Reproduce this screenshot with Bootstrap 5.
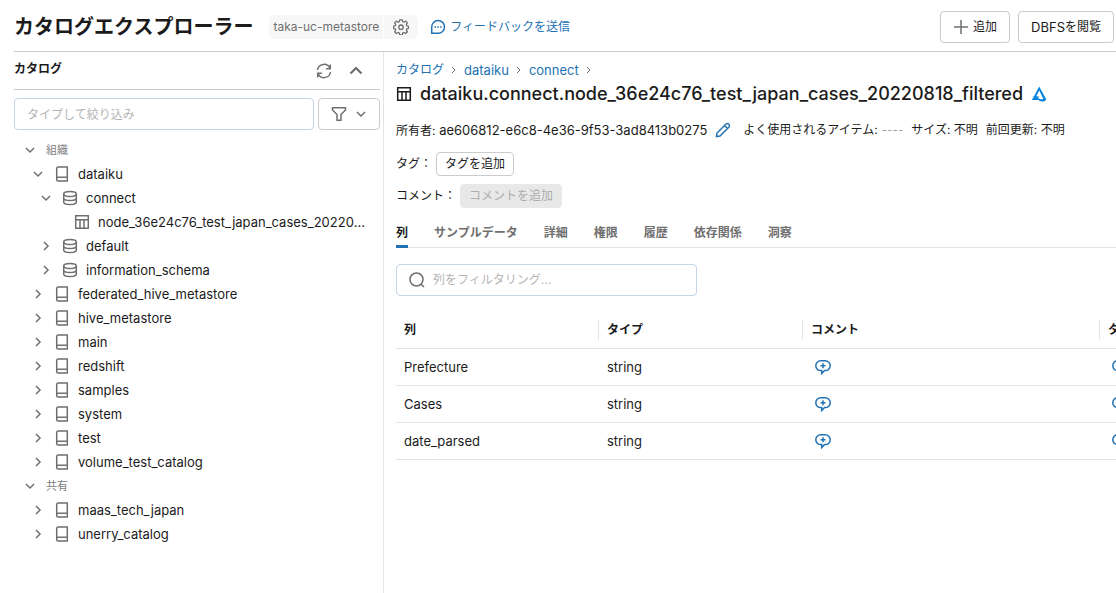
<!DOCTYPE html>
<html lang="ja">
<head>
<meta charset="utf-8">
<meta name="viewport" content="width=device-width, initial-scale=1">
<title>カタログエクスプローラー</title>
<link href="https://cdn.jsdelivr.net/npm/bootstrap@5.3.0/dist/css/bootstrap.min.css" rel="stylesheet">
<style>
  :root { --ink: #1b1b1b; --muted: #6f6f6f; --line: #cbcbcb; --soft: #e4e4e4; --blue: #2272b4; }
  body { font-family: Inter, "Noto Sans CJK JP", sans-serif; font-size: 13px; line-height: 20px; color: var(--ink); background: #fff; }
  a { color: var(--blue); text-decoration: none; }
  svg { fill: none; stroke: currentColor; stroke-width: 1.5; flex: none; display: block; }
  .ja { font-size: 12px; }
  .ic { width: 16px; height: 16px; }
  .ic-sm { width: 12px; height: 12px; }
  .muted { color: var(--muted); }
  .page-head { margin-left: 14px; height: 52px; padding: 2px 2px 0 0; border-bottom: 1px solid var(--line); }
  .page-title { font-size: 20px; line-height: 28px; font-weight: 700; }
  .chip { background: #f7f7f7; color: var(--muted); font-size: 12px; height: 24px; padding: 2px 4px; margin-right: 1px; }
  .chip-icon { background: #f7f7f7; color: var(--muted); border: 0; height: 24px; padding: 4px 9px; }
  .tool { --bs-btn-font-size: 12px; --bs-btn-line-height: 20px; --bs-btn-padding-x: 12px; --bs-btn-padding-y: 5px; --bs-btn-color: var(--ink); --bs-btn-border-color: var(--line); --bs-btn-border-radius: 4px; display: flex; align-items: center; white-space: nowrap; }
  .tool-sm { --bs-btn-padding-x: 8px; --bs-btn-padding-y: 1px; }
  .tool-off:disabled { background: #e8e8e8; border-color: #e8e8e8; color: #adadad; opacity: 1; }
  .latin { font-size: 13px; }
  .side { width: 384px; padding: 0 3px 0 14px; border-right: 1px solid var(--soft); }
  .side-head { height: 38px; border-bottom: 1px solid var(--line); }
  .bare { border: 0; background: none; padding: 0; color: var(--muted); }
  .edit { color: var(--blue); }
  .field { border: 1px solid #c3d5e6; border-radius: 4px; height: 32px; padding: 0 12px; font-size: 12px; color: var(--ink); }
  .field::placeholder, .field input::placeholder { color: #b5b5b5; opacity: 1; }
  .field input { border: 0; outline: 0; padding: 0; }
  .tree { padding-top: 8px; }
  .tree li { display: flex; align-items: center; height: 24px; color: var(--muted); }
  .tree a { color: var(--ink); margin-left: 8px; }
  .tree .ic { margin-left: 10px; }
  .lv0 { padding-left: 10px; }
  .lv0 span { margin-left: 10px; font-size: 11px; color: #808080; }
  .lv1 { padding-left: 18px; }
  .lv2 { padding-left: 26px; }
  .lv3 { padding-left: 50px; padding-right: 8px; }
  .detail { min-width: 0; padding-left: 12px; overflow: hidden; }
  .crumbs { padding-top: 8px; gap: 7px; }
  .crumbs svg { color: var(--muted); stroke-width: 1; }
  .obj-title { font-size: 18px; line-height: 24px; font-weight: 500; margin: 2px 0 0; }
  .meta { margin-top: 14px; height: 20px; }
  .tabs { margin-top: 8px; gap: 26px; border-bottom: 1px solid var(--soft); height: 32px; --bs-nav-link-padding-x: 0; --bs-nav-link-padding-y: 7px; }
  .tabs .nav-link { font-size: 12px; font-weight: 700; color: var(--muted); height: 32px; line-height: 20px; }
  .tabs .nav-link.active { color: var(--ink); border-bottom: 3px solid var(--blue); }
  .filter { width: 301px; margin-top: 16px; }
  .grid { table-layout: fixed; width: 904px; margin-top: 16px; --bs-table-border-color: #e4e4e4; --bs-table-color: #1b1b1b; }
  .grid > :not(caption) > * > * { padding: 8px; }
  .grid th { font-size: 12px; font-weight: 700; }
  .grid th > div { margin-right: -8px; border-right: 1px solid var(--soft); }
  .say { color: var(--blue); padding: 2px 4px; display: block; }
</style>
</head>
<body class="min-vh-100 d-flex flex-column overflow-x-hidden">
<svg width="0" height="0" class="position-absolute" aria-hidden="true">
  <symbol id="down" viewBox="0 0 12 12"><path d="M2 4l4 4 4-4"/></symbol>
  <symbol id="right" viewBox="0 0 12 12"><path d="M4 2l4 4-4 4"/></symbol>
  <symbol id="book" viewBox="0 0 16 16"><path d="M13.3 11.2V1H4.2Q2.700 1 2.700 2.500v11Q2.700 15 4.200 15h9.100v-3.800H4.400q-1.700 0-1.700 2"/></symbol>
  <symbol id="db" viewBox="0 0 16 16"><ellipse cx="8" cy="4" rx="6.300" ry="2.500"/><path d="M1.700 4v8c0 1.400 2.800 2.500 6.300 2.500s6.300-1.100 6.300-2.500V4M1.700 8c0 1.400 2.800 2.500 6.300 2.500s6.300-1.100 6.300-2.500"/></symbol>
  <symbol id="tbl" viewBox="0 0 16 16"><path d="M1.700 1.700h12.600v12.600H1.700zM1.700 5.700h12.600M6 5.700v8.600M10 5.700v8.600"/></symbol>
  <symbol id="say" viewBox="0 0 16 16"><path d="M5.700 1.800h4.600a4.900 4.900 0 0 1 0 9.800H9.600L6.700 14.600v-3h-1a4.900 4.900 0 0 1 0-9.800zM8 4.200v5M5.500 6.700h5"/></symbol>
</svg>

<header class="page-head d-flex align-items-center">
  <h1 class="page-title m-0 text-nowrap">カタログエクスプローラー</h1>
  <div class="d-flex ms-3">
    <span class="chip rounded-start text-nowrap">taka-uc-metastore</span>
    <button type="button" class="chip-icon rounded-end" aria-label="設定"><svg class="ic" viewBox="0 0 16 16"><path stroke-width="1.300" stroke-linejoin="round" d="M6.700.8h2.600l.4 1.900 1.200.5 1.700-1.100 1.800 1.800-1.100 1.700.5 1.200 1.800.4v2.200l-1.800.5-.5 1.200 1.100 1.600-1.800 1.800-1.700-1-1.200.4-.4 1.900H6.700l-.4-1.900-1.200-.4-1.700 1-1.800-1.800 1.100-1.600-.5-1.200L.4 9.400V7.200l1.800-.4.5-1.200L1.600 3.900l1.800-1.800 1.700 1.100 1.200-.5z"/><circle cx="8" cy="8.200" r="2.200" stroke-width="1.300"/></svg></button>
  </div>
  <a href="#" class="d-flex align-items-center gap-1 ja ms-2 ps-1 text-nowrap"><svg class="ic" viewBox="0 0 16 16"><path d="M1.700 14.300V8A6.400 6.400 0 1 1 8 14.300z"/><path d="M4.500 8H6M7.250 8h1.500M10 8h1.500"/></svg>フィードバックを送信</a>
  <div class="d-flex gap-2 ms-auto">
    <button type="button" class="btn tool gap-1"><svg class="ic muted" viewBox="0 0 16 16"><path d="M8 1v14M1 8h14"/></svg>追加</button>
    <button type="button" class="btn tool"><span class="latin">DBFS</span>を閲覧</button>
  </div>
</header>

<div class="d-flex flex-grow-1">
  <aside class="side flex-shrink-0">
    <div class="side-head d-flex align-items-center">
      <h2 class="ja fw-bold m-0 pb-1 lh-base">カタログ</h2>
      <button type="button" class="bare ms-auto" aria-label="更新"><svg class="ic" viewBox="0 0 16 16"><path d="M1.500 7A6.500 6.500 0 0 1 14 5.500M14.500 9A6.500 6.500 0 0 1 2 10.500M14.300 1.500v4.200h-4.200M1.700 14.500v-4.200h4.200"/></svg></button>
      <button type="button" class="bare mx-3" aria-label="折りたたむ"><svg class="ic" viewBox="0 0 16 16"><path stroke-width="2.200" d="M2.500 10.500L8 5l5.500 5.500"/></svg></button>
    </div>
    <div class="d-flex gap-1 pt-2">
      <input type="text" class="field flex-grow-1" placeholder="タイプして絞り込み" aria-label="タイプして絞り込み">
      <button type="button" class="btn tool gap-2" aria-label="フィルター"><svg class="ic muted" viewBox="0 0 16 16"><path d="M1.500 1.700h13v2.200L10 8.500v5.800H6V8.500L1.500 3.900z"/></svg><svg class="ic-sm muted"><use href="#down"/></svg></button>
    </div>
    <ul class="tree list-unstyled m-0">
      <li class="lv0"><svg class="ic-sm"><use href="#down"/></svg><span>組織</span></li>
      <li class="lv1"><svg class="ic-sm"><use href="#down"/></svg><svg class="ic"><use href="#book"/></svg><a href="#">dataiku</a></li>
      <li class="lv2"><svg class="ic-sm"><use href="#down"/></svg><svg class="ic"><use href="#db"/></svg><a href="#">connect</a></li>
      <li class="lv3"><svg class="ic"><use href="#tbl"/></svg><a href="#" class="text-truncate">node_36e24c76_test_japan_cases_20220818_filtered</a></li>
      <li class="lv2"><svg class="ic-sm"><use href="#right"/></svg><svg class="ic"><use href="#db"/></svg><a href="#">default</a></li>
      <li class="lv2"><svg class="ic-sm"><use href="#right"/></svg><svg class="ic"><use href="#db"/></svg><a href="#">information_schema</a></li>
      <li class="lv1"><svg class="ic-sm"><use href="#right"/></svg><svg class="ic"><use href="#book"/></svg><a href="#">federated_hive_metastore</a></li>
      <li class="lv1"><svg class="ic-sm"><use href="#right"/></svg><svg class="ic"><use href="#book"/></svg><a href="#">hive_metastore</a></li>
      <li class="lv1"><svg class="ic-sm"><use href="#right"/></svg><svg class="ic"><use href="#book"/></svg><a href="#">main</a></li>
      <li class="lv1"><svg class="ic-sm"><use href="#right"/></svg><svg class="ic"><use href="#book"/></svg><a href="#">redshift</a></li>
      <li class="lv1"><svg class="ic-sm"><use href="#right"/></svg><svg class="ic"><use href="#book"/></svg><a href="#">samples</a></li>
      <li class="lv1"><svg class="ic-sm"><use href="#right"/></svg><svg class="ic"><use href="#book"/></svg><a href="#">system</a></li>
      <li class="lv1"><svg class="ic-sm"><use href="#right"/></svg><svg class="ic"><use href="#book"/></svg><a href="#">test</a></li>
      <li class="lv1"><svg class="ic-sm"><use href="#right"/></svg><svg class="ic"><use href="#book"/></svg><a href="#">volume_test_catalog</a></li>
      <li class="lv0"><svg class="ic-sm"><use href="#down"/></svg><span>共有</span></li>
      <li class="lv1"><svg class="ic-sm"><use href="#right"/></svg><svg class="ic"><use href="#book"/></svg><a href="#">maas_tech_japan</a></li>
      <li class="lv1"><svg class="ic-sm"><use href="#right"/></svg><svg class="ic"><use href="#book"/></svg><a href="#">unerry_catalog</a></li>
    </ul>
  </aside>

  <main class="detail flex-grow-1">
    <nav class="crumbs d-flex align-items-center" aria-label="パンくず">
      <a href="#" class="ja">カタログ</a><svg width="6" height="8" viewBox="0 0 6 8"><path d="M1 1l3 3-3 3"/></svg>
      <a href="#">dataiku</a><svg width="6" height="8" viewBox="0 0 6 8"><path d="M1 1l3 3-3 3"/></svg>
      <a href="#">connect</a><svg width="6" height="8" viewBox="0 0 6 8"><path d="M1 1l3 3-3 3"/></svg>
    </nav>
    <h2 class="obj-title d-flex align-items-center gap-2 text-nowrap"><svg class="ic"><use href="#tbl"/></svg>dataiku.connect.node_36e24c76_test_japan_cases_20220818_filtered
      <svg class="ic" viewBox="0 0 16 16"><path fill="#0b84e0" stroke="none" fill-rule="evenodd" d="M8.200.5l7.300 13.300-2.800 1.700c-1.500.3-3.700-.4-5.200-1.500H.5l1.600-1.400-1-.6 2.200-.8L.9 10.600h2zM8.300 4.400L5.200 10.300l3.200.3-1.800 1.300c2 .8 3.700 1.500 5.700 1.200z"/></svg>
    </h2>
    <div class="meta d-flex align-items-center text-nowrap">
      <span><span class="ja">所有者:</span> ae606812-e6c8-4e36-9f53-3ad8413b0275</span>
      <button type="button" class="bare edit mx-2" aria-label="所有者を編集"><svg class="ic" viewBox="0 0 16 16"><path d="M1.500 14.500l.5-3.500L11 2q1.300-1 2.500 0l.5.5q1 1.200 0 2.500l-9 9zM9.500 3.500l3 3"/></svg></button>
      <span class="ja ms-1">よく使用されるアイテム:</span><span class="text-black-50 ja fw-light ms-1 me-1">----</span>
      <span class="ja ms-1">サイズ: 不明</span><span class="ja ms-2">前回更新: 不明</span>
    </div>
    <div class="d-flex align-items-center mt-2 pt-1"><span class="ja me-1">タグ：</span><button type="button" class="btn tool tool-sm">タグを追加</button></div>
    <div class="d-flex align-items-center mt-2"><span class="ja me-1">コメント：</span><button type="button" class="btn tool tool-sm tool-off" disabled>コメントを追加</button></div>
    <ul class="nav tabs flex-nowrap text-nowrap">
      <li class="nav-item"><a class="nav-link active" aria-current="page" href="#">列</a></li>
      <li class="nav-item"><a class="nav-link" href="#">サンプルデータ</a></li>
      <li class="nav-item"><a class="nav-link" href="#">詳細</a></li>
      <li class="nav-item"><a class="nav-link" href="#">権限</a></li>
      <li class="nav-item"><a class="nav-link" href="#">履歴</a></li>
      <li class="nav-item"><a class="nav-link" href="#">依存関係</a></li>
      <li class="nav-item"><a class="nav-link" href="#">洞察</a></li>
    </ul>
    <label class="field filter d-flex align-items-center gap-2"><svg class="ic muted" viewBox="0 0 16 16"><circle cx="7.500" cy="7.500" r="6.500"/><path d="M12 12l3 3"/></svg><input type="text" class="flex-grow-1" placeholder="列をフィルタリング..." aria-label="列をフィルタリング"></label>
    <table class="table grid mb-0">
      <colgroup><col style="width:203px"><col style="width:204px"><col style="width:297px"><col style="width:200px"></colgroup>
      <thead><tr><th scope="col"><div>列</div></th><th scope="col"><div>タイプ</div></th><th scope="col"><div>コメント</div></th><th scope="col"><div>タグ</div></th></tr></thead>
      <tbody>
        <tr><td>Prefecture</td><td>string</td><td><button type="button" class="bare say" aria-label="コメントを追加"><svg class="ic"><use href="#say"/></svg></button></td><td><button type="button" class="bare say" aria-label="タグを追加"><svg class="ic"><use href="#say"/></svg></button></td></tr>
        <tr><td>Cases</td><td>string</td><td><button type="button" class="bare say" aria-label="コメントを追加"><svg class="ic"><use href="#say"/></svg></button></td><td><button type="button" class="bare say" aria-label="タグを追加"><svg class="ic"><use href="#say"/></svg></button></td></tr>
        <tr><td>date_parsed</td><td>string</td><td><button type="button" class="bare say" aria-label="コメントを追加"><svg class="ic"><use href="#say"/></svg></button></td><td><button type="button" class="bare say" aria-label="タグを追加"><svg class="ic"><use href="#say"/></svg></button></td></tr>
      </tbody>
    </table>
  </main>
</div>
<script src="https://cdn.jsdelivr.net/npm/bootstrap@5.3.0/dist/js/bootstrap.bundle.min.js"></script>
</body>
</html>
